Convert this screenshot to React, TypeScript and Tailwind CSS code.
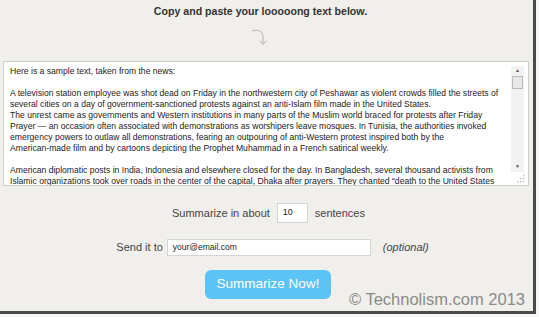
import React from "react";

const lines = [
  "Here is a sample text, taken from the news:",
  "",
  "A television station employee was shot dead on Friday in the northwestern city of Peshawar as violent crowds filled the streets of",
  "several cities on a day of government-sanctioned protests against an anti-Islam film made in the United States.",
  "The unrest came as governments and Western institutions in many parts of the Muslim world braced for protests after Friday",
  "Prayer — an occasion often associated with demonstrations as worshipers leave mosques. In Tunisia, the authorities invoked",
  "emergency powers to outlaw all demonstrations, fearing an outpouring of anti-Western protest inspired both by the",
  "American-made film and by cartoons depicting the Prophet Muhammad in a French satirical weekly.",
  "",
  "American diplomatic posts in India, Indonesia and elsewhere closed for the day. In Bangladesh, several thousand activists from",
  "Islamic organizations took over roads in the center of the capital, Dhaka after prayers. They chanted “death to the United States",
];

export default function App() {
  return (
    <div
      className="w-[539px] h-[317px] bg-[#f7f7f7] overflow-hidden"
      style={{ fontFamily: '"Liberation Sans", Arial, sans-serif' }}
    >
      <div className="w-[536px] h-[314px] bg-[#f1efec] border-r-[3px] border-b-[3px] border-[#4b4b4b] flex flex-col items-center">
        <h1 className="mt-[4px] mr-[12px] text-[10.6px] font-bold text-[#333]">
          Copy and paste your looooong text below.
        </h1>
        <svg width="22" height="22" viewBox="0 0 22 22" className="mt-[7px] mr-[12px]" fill="none" stroke="#b5b3b0" strokeWidth="1">
          <path d="M2 4 C8 2, 13 4, 13 10 L13 17" />
          <path d="M9.5 13.5 L13 17.5 L16.5 13.5" />
        </svg>
        <div className="mt-[12px] self-start ml-[3px] w-[526px] h-[125px] bg-white border border-[#cfcdca] flex">
          <div className="flex-1 pl-[6px] pt-[4px] text-[8.6px] leading-[11px] text-[#222] overflow-hidden">
            {lines.map((l, i) => (
              <div key={i} className="whitespace-nowrap h-[11px]">
                {l}
              </div>
            ))}
          </div>
          <div className="relative w-[17px] pr-[4px] pt-[4px] flex flex-col">
            <div className="w-[13px] h-[106px] bg-[#f2f2f2] flex flex-col items-center">
              <div className="h-[10px] flex items-center text-[5px] text-[#555]">▲</div>
              <div className="w-[11px] h-[13px] bg-[#e8e8e8] border border-[#bbb]" />
              <div className="flex-1" />
              <div className="h-[10px] flex items-center text-[5px] text-[#555]">▼</div>
            </div>
            <svg width="8" height="8" viewBox="0 0 8 8" className="absolute right-[3px] bottom-[2px]" fill="#bbb">
              <rect x="6" y="0" width="1.4" height="1.4" />
              <rect x="3" y="3" width="1.4" height="1.4" />
              <rect x="6" y="3" width="1.4" height="1.4" />
              <rect x="0" y="6" width="1.4" height="1.4" />
              <rect x="3" y="6" width="1.4" height="1.4" />
              <rect x="6" y="6" width="1.4" height="1.4" />
            </svg>
          </div>
        </div>
        <div className="mt-[17px] flex items-center gap-[7px] text-[11px] text-[#444] ml-[4px]">
          <span>Summarize in about</span>
          <div className="w-[31px] h-[20px] bg-white border border-[#d4d4d4] flex items-center pl-[5px] text-[9px] text-[#222]">
            10
          </div>
          <span>sentences</span>
        </div>
        <div className="mt-[16px] flex items-center text-[11px] text-[#444] ml-[12px]">
          <span>Send it to</span>
          <div className="ml-[4px] w-[204px] h-[17px] bg-white border border-[#d4d4d4] flex items-center pl-[5px] text-[8.5px] text-[#222]">
            your@email.com
          </div>
          <span className="italic ml-[12px]">(optional)</span>
        </div>
        <div className="w-full flex-1 relative">
          <button className="absolute left-[205px] top-[14px] w-[126px] h-[29px] rounded-[6px] bg-[#5cc3f7] text-white text-[13.5px]">
            Summarize Now!
          </button>
          <div className="absolute right-[8px] bottom-[-1px] text-[16.5px] text-[#8a8a8a]">
            © Technolism.com 2013
          </div>
        </div>
      </div>
    </div>
  );
}
